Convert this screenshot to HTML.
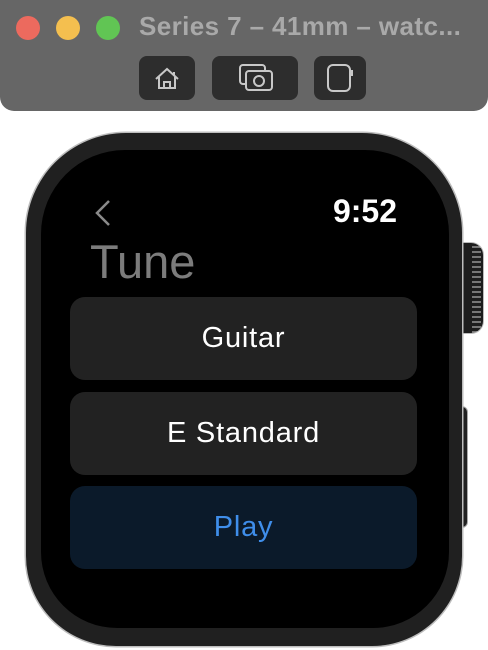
<!DOCTYPE html>
<html><head><style>
body{margin:0;width:488px;height:650px;background:#fff;position:relative;overflow:hidden;font-family:"Liberation Sans",sans-serif}
.bar{position:absolute;left:0;top:0;width:488px;height:111px;background:#666;border-radius:0 0 14px 14px}
.dot{position:absolute;top:16px;width:24px;height:24px;border-radius:50%}
.title{position:absolute;left:139px;top:11px;font-size:26px;font-weight:bold;color:#a9a9a9;white-space:nowrap;letter-spacing:0.4px}
.tb{position:absolute;top:56px;height:44px;background:#2d2d2d;border-radius:8px}
.body{position:absolute;left:26px;top:133px;width:436px;height:513px;background:#202020;border-radius:100px 100px 90px 90px;box-shadow:0 0 0 1.5px #bdbdbd}
.screen{position:absolute;left:41px;top:150px;width:408px;height:478px;background:#000;border-radius:84px 84px 76px 76px}
.btn{position:absolute;left:70px;width:347px;height:83px;background:#222;border-radius:15px;color:#fff;font-size:29px;text-align:center;line-height:83px;letter-spacing:0.8px}
</style></head><body>
<div class="bar">
<div class="dot" style="left:16px;background:#ec6a5e"></div>
<div class="dot" style="left:56px;background:#f4bf4f"></div>
<div class="dot" style="left:96px;background:#61c554"></div>
<div class="title">Series 7 – 41mm – watc...</div>
<div class="tb" style="left:139px;width:56px"><svg width="56" height="44" viewBox="0 0 56 44"><path d="M17 23 L28 13 L39 23 M20 21 V32 H36 V21 M25 32 V26 H31 V32 M35 16 V19" fill="none" stroke="#c8c8c8" stroke-width="2"/></svg></div>
<div class="tb" style="left:212px;width:86px"><svg width="86" height="44" viewBox="0 0 86 44"><rect x="28" y="9" width="25" height="19" rx="3" fill="none" stroke="#c8c8c8" stroke-width="2"/><rect x="34" y="15" width="26" height="19" rx="3" fill="#2d2d2d" stroke="#c8c8c8" stroke-width="2"/><circle cx="47" cy="25" r="5" fill="none" stroke="#c8c8c8" stroke-width="2"/></svg></div>
<div class="tb" style="left:314px;width:52px"><svg width="52" height="44" viewBox="0 0 52 44"><rect x="14" y="9" width="22" height="26" rx="5" fill="none" stroke="#c8c8c8" stroke-width="2"/><rect x="36" y="14" width="3" height="6" fill="#c8c8c8"/></svg></div>
</div>
<div style="position:absolute;left:457px;top:407px;width:10px;height:120px;background:#202020;border-radius:5px;box-shadow:0 0 0 1px #aaa"></div>
<div style="position:absolute;left:450px;top:243px;width:33px;height:90px;background:#1d1d1d;border-radius:12px;box-shadow:0 0 0 1px #bbb;background-image:repeating-linear-gradient(#1d1d1d 0 3px,#777 3px 5px);background-size:9px 100%;background-position:right 2px top;background-repeat:no-repeat"></div>
<div class="body"></div>
<div class="screen"></div>
<svg style="position:absolute;left:90px;top:198px" width="24" height="32"><path d="M19 3 L7 15 L19 27" fill="none" stroke="#8a8a8a" stroke-width="2.5"/></svg>
<div style="position:absolute;right:91px;top:193px;font-size:32px;color:#fff;font-weight:bold">9:52</div>
<div style="position:absolute;left:90px;top:234px;font-size:47px;color:#7c7c7c">Tune</div>
<div class="btn" style="top:297px">Guitar</div>
<div class="btn" style="top:392px">E Standard</div>
<div class="btn" style="top:486px;background:#0b1a2a;color:#3f8eea">Play</div>
</body></html>
